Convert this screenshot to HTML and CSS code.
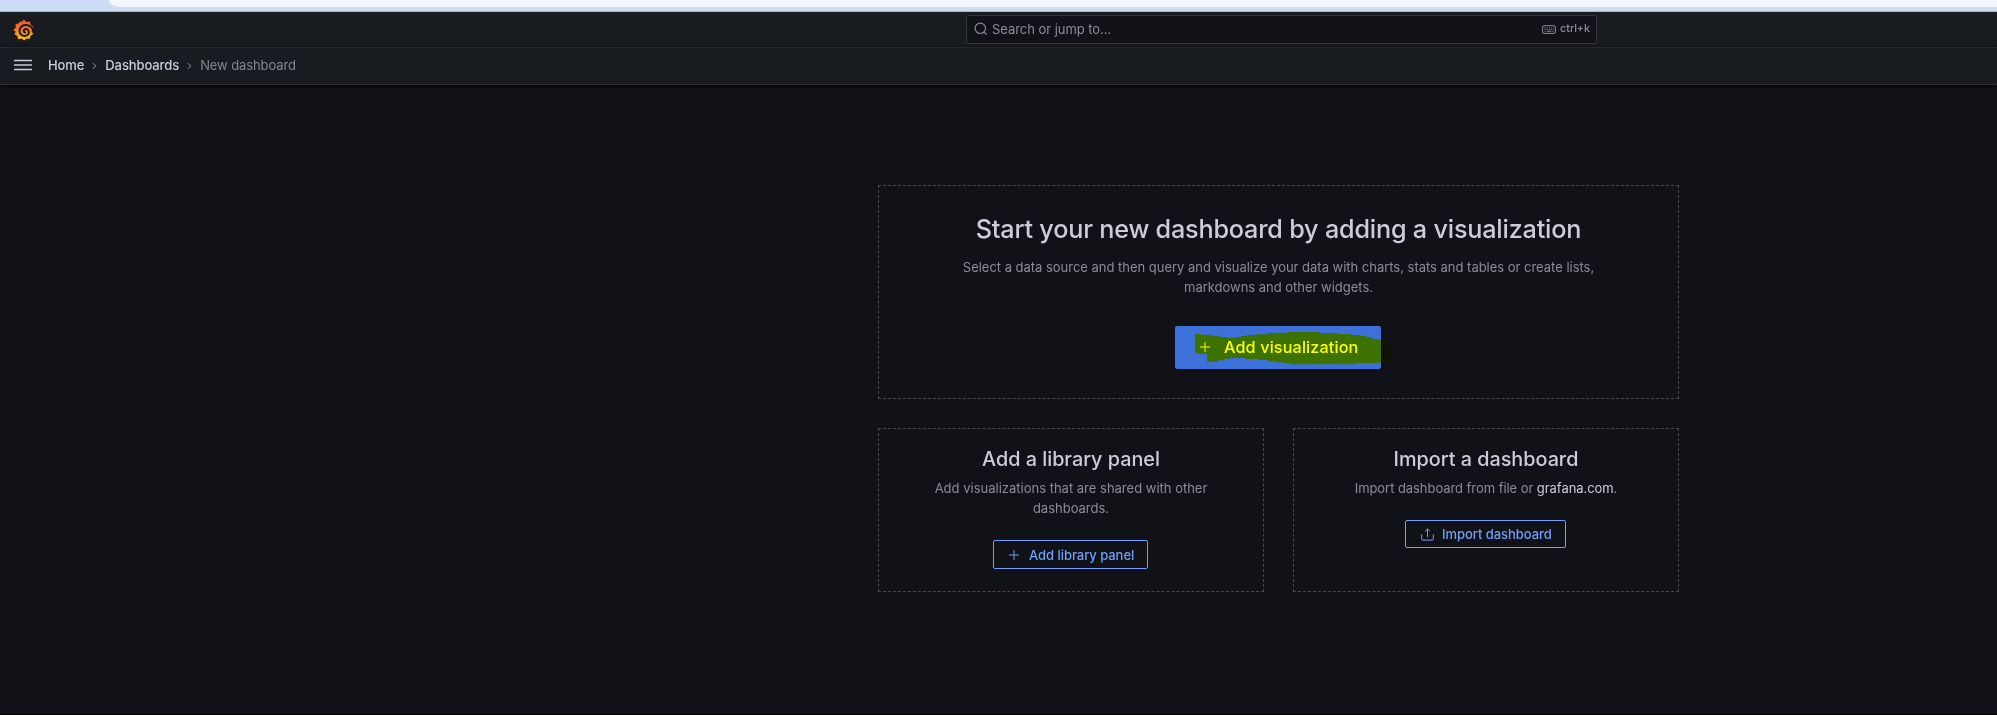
FILE: index.html
```html
<!DOCTYPE html>
<html lang="en">
<head>
<meta charset="utf-8">
<title>New dashboard - Dashboards - Grafana</title>
<link rel="stylesheet" href="styles.css">
</head>
<body>
<div class="browser-edge"><div class="browser-toolbar"></div></div>
<header class="topbar">
  <svg class="logo" viewBox="0 0 21 22">
    <defs><linearGradient id="flame" x1="0" y1="0" x2="0" y2="1"><stop offset="0" stop-color="#f05a28"/><stop offset=".35" stop-color="#f4692a"/><stop offset="1" stop-color="#fbca0a"/></linearGradient></defs>
    <path fill="url(#flame)" d="M10.7 .3 13.3 2.9 17 2.5 17.6 5.6 20.2 7.7 20 11 18.2 12 20.4 14.9 17.5 17 16.6 20 13.6 19.6 11.1 21.5 8.8 19.5 5 20.3 4.5 17 1.5 15.3 2.7 12.6 .2 11.2 2.8 8.5 2.5 5 5.5 4.5 7.3 2.2 9.2 2.7Z"/>
    <path class="logo-spiral" d="M20.5 11.5C17.5 4.5 9 4.1 6.8 10.1c-1.1 3.7 1.3 6.8 4.7 6.8 2.9 0 4.7-2 4.4-4.1-.3-2.8-3.8-3.8-5-1.7-.5 1.2.2 2.3 1.3 2.4"/>
  </svg>
  <div class="search">
    <svg class="search-icon" viewBox="0 0 14 14"><circle cx="6.3" cy="6.3" r="5.2"/><path d="m10.2 10.2 2.3 2.3"/></svg>
    <span class="search-label">Search or jump to...</span>
    <svg class="key-icon" viewBox="0 0 14 9"><rect x=".6" y=".6" width="12.8" height="7.8" rx="1.5"/><path d="M2.5 2.8h1m1.2 0h1m1.2 0h1m1.2 0h1m1.2 0h.8M2.5 4.5h1m1.2 0h1m1.2 0h1m1.2 0h1m1.2 0h.8M2.5 6.3h1m1.2 0h4.7m1 0h1"/></svg>
    <span class="shortcut">ctrl+k</span>
  </div>
</header>
<nav class="breadcrumbs">
  <svg class="menu" viewBox="0 0 18 12"><path d="M.7 1.5h16.6M.7 6h16.6M.7 10.5h16.6"/></svg>
  <span class="crumb">Home</span>
  <svg class="chevron" viewBox="0 0 5 8"><path d="m1 1.2 2.7 2.8L1 6.8"/></svg>
  <span class="crumb">Dashboards</span>
  <svg class="chevron" viewBox="0 0 5 8"><path d="m1 1.2 2.7 2.8L1 6.8"/></svg>
  <span class="crumb current">New dashboard</span>
</nav>
<main class="page">
  <section class="card card-main">
    <h1>Start your new dashboard by adding a visualization</h1>
    <p class="lead">Select a data source and then query and visualize your data with charts, stats and tables or create lists, markdowns and other widgets.</p>
    <div class="primary">
      <svg class="plus" viewBox="0 0 10 10"><path d="M5 0v10M0 5h10"/></svg>
      <span class="primary-label">Add visualization</span>
      <svg class="marker" viewBox="0 0 720 225"><path d="M105 72h18v2h28v3h27v4h24v2h26v-2h15v-3h15v-2h27v-3h36v-3h28v-2h34v-2h96v3h55v3h40v3h28v3h18v4h15v4h18v3h22v5h20v60h-20v3h-18v3h-70v3H394v-3h-25v-3h-22v-3h-22v-4h-28v-3h-40v-3h-47v3h-20v4h-16v4h-33v-24h-28l-8-7z"/></svg>
    </div>
  </section>
  <div class="row">
    <section class="card card-small">
      <h2>Add a library panel</h2>
      <p class="note">Add visualizations that are shared with other dashboards.</p>
      <div class="outline library">
        <svg class="plus" viewBox="0 0 10 10"><path d="M5 0v10M0 5h10"/></svg>
        <span>Add library panel</span>
      </div>
    </section>
    <section class="card card-small">
      <h2>Import a dashboard</h2>
      <p class="note import-note">Import dashboard from file or <a>grafana.com</a>.</p>
      <div class="outline import">
        <svg class="upload" viewBox="0 0 13 13"><path d="M6.5 9V1M3.8 3.5 6.5.9l2.7 2.6M.7 6.5v4.3q0 1.3 1.3 1.3h9q1.3 0 1.3-1.3V6.5"/></svg>
        <span>Import dashboard</span>
      </div>
    </section>
  </div>
</main>
</body>
</html>
```
FILE: styles.css
```css
* { box-sizing: border-box; }
body {
  margin: 0;
  height: 715px;
  overflow: hidden;
  display: flex;
  flex-direction: column;
  background: #111217;
  color: #ccccdc;
  font-family: Inter, "Liberation Sans", sans-serif;
  font-size: 13px;
  letter-spacing: -0.05px;
}
svg { display: block; flex: none; fill: none; stroke: currentColor; overflow: visible; }
h1, h2, p { margin: 0; font-weight: 450; }
.browser-edge { flex: none; height: 12px; background: #cbdcf6; border-bottom: 1px solid #a9b7cf; padding-left: 109px; }
.browser-toolbar { height: 7px; background: #f4f7fd; border-bottom-left-radius: 14px 9px; }
.topbar { flex: none; height: 36px; display: flex; align-items: flex-start; background: #181b1f; border-bottom: 1px solid #36383d; padding: 3px 400px 0 13px; justify-content: space-between; }
.logo { width: 21px; height: 22px; margin-top: 4px; stroke: none; }
.logo-spiral { stroke: #181b1f; stroke-width: 2; stroke-linecap: round; }
.search { width: 631px; height: 29px; display: flex; align-items: center; border: 1px solid #35363c; border-radius: 2px; background: #111217; color: #8b8c96; padding: 0 6px 1px 7px; }
.search-icon { width: 14px; height: 14px; stroke-width: 1.2; }
.search-label { margin-left: 4px; flex: 1; }
.key-icon { width: 14px; height: 9px; margin-right: 4px; }
.shortcut { font-size: 10.8px; font-weight: 500; margin-top: -1px; }
.breadcrumbs { flex: none; height: 37px; display: flex; align-items: center; background: #181b1f; border-bottom: 1px solid #303237; box-shadow: 0 1px 5px #000; padding: 0 0 2px 14px; position: relative; }
.menu { width: 18px; height: 12px; stroke-width: 1.7; stroke-linecap: round; margin-right: 16px; }
.crumb { font-weight: 450; letter-spacing: -0.1px; }
.current { font-weight: 400; color: #85868f; }
.chevron { width: 5px; height: 8px; margin: 1px 8px 0; color: #9697a3; }
.page { flex: 1; display: flex; flex-direction: column; gap: 29px; padding: 100px 317px 0 878px; border-bottom: 1px solid #030305; }
.card { display: flex; flex-direction: column; align-items: center; text-align: center; border: 1px dashed #494a50; border-radius: 1px; }
.card-main { width: 801px; height: 214px; padding-top: 27px; }
h1 { font-size: 25.2px; line-height: 32px; letter-spacing: -0.19px; }
.lead { width: 650px; margin-top: 12px; line-height: 20px; color: #8b8c96; font-weight: 400; letter-spacing: -0.02px; }
.primary { position: relative; width: 206px; height: 43px; margin-top: 29px; padding: 0 0 1px 25px; display: flex; align-items: center; border-radius: 2px; background: #3d71d9; color: #fff; font-size: 16.2px; font-weight: 500; letter-spacing: 0.13px; left: -0.5px; }
.plus { width: 10px; height: 10px; }
.primary-label { margin-left: 14px; white-space: nowrap; }
.marker { position: absolute; left: -15px; top: -16px; width: 240px; height: 75px; fill: #ff0; stroke: none; mix-blend-mode: multiply; }
.row { display: flex; justify-content: space-between; width: 801px; }
.card-small { width: 386px; height: 164px; padding-top: 17px; }
h2 { font-size: 19.8px; line-height: 26px; letter-spacing: 0; }
.note { width: 300px; line-height: 20px; margin-top: 6px; color: #8b8c96; font-weight: 400; letter-spacing: 0; }
.import-note { letter-spacing: -0.06px; }
.note a { color: #ccccdc; }
.outline { height: 29px; display: flex; align-items: center; border: 1px solid #6e9fff; border-radius: 2px; color: #6e9fff; font-weight: 500; margin-top: 22px; white-space: nowrap; }
.library { width: 155px; padding-left: 15px; gap: 10px; margin-right: 1px; }
.import { width: 161px; height: 28px; padding-left: 15px; gap: 8px; margin-right: 1px; }
.upload { width: 13px; height: 13px; }
```
